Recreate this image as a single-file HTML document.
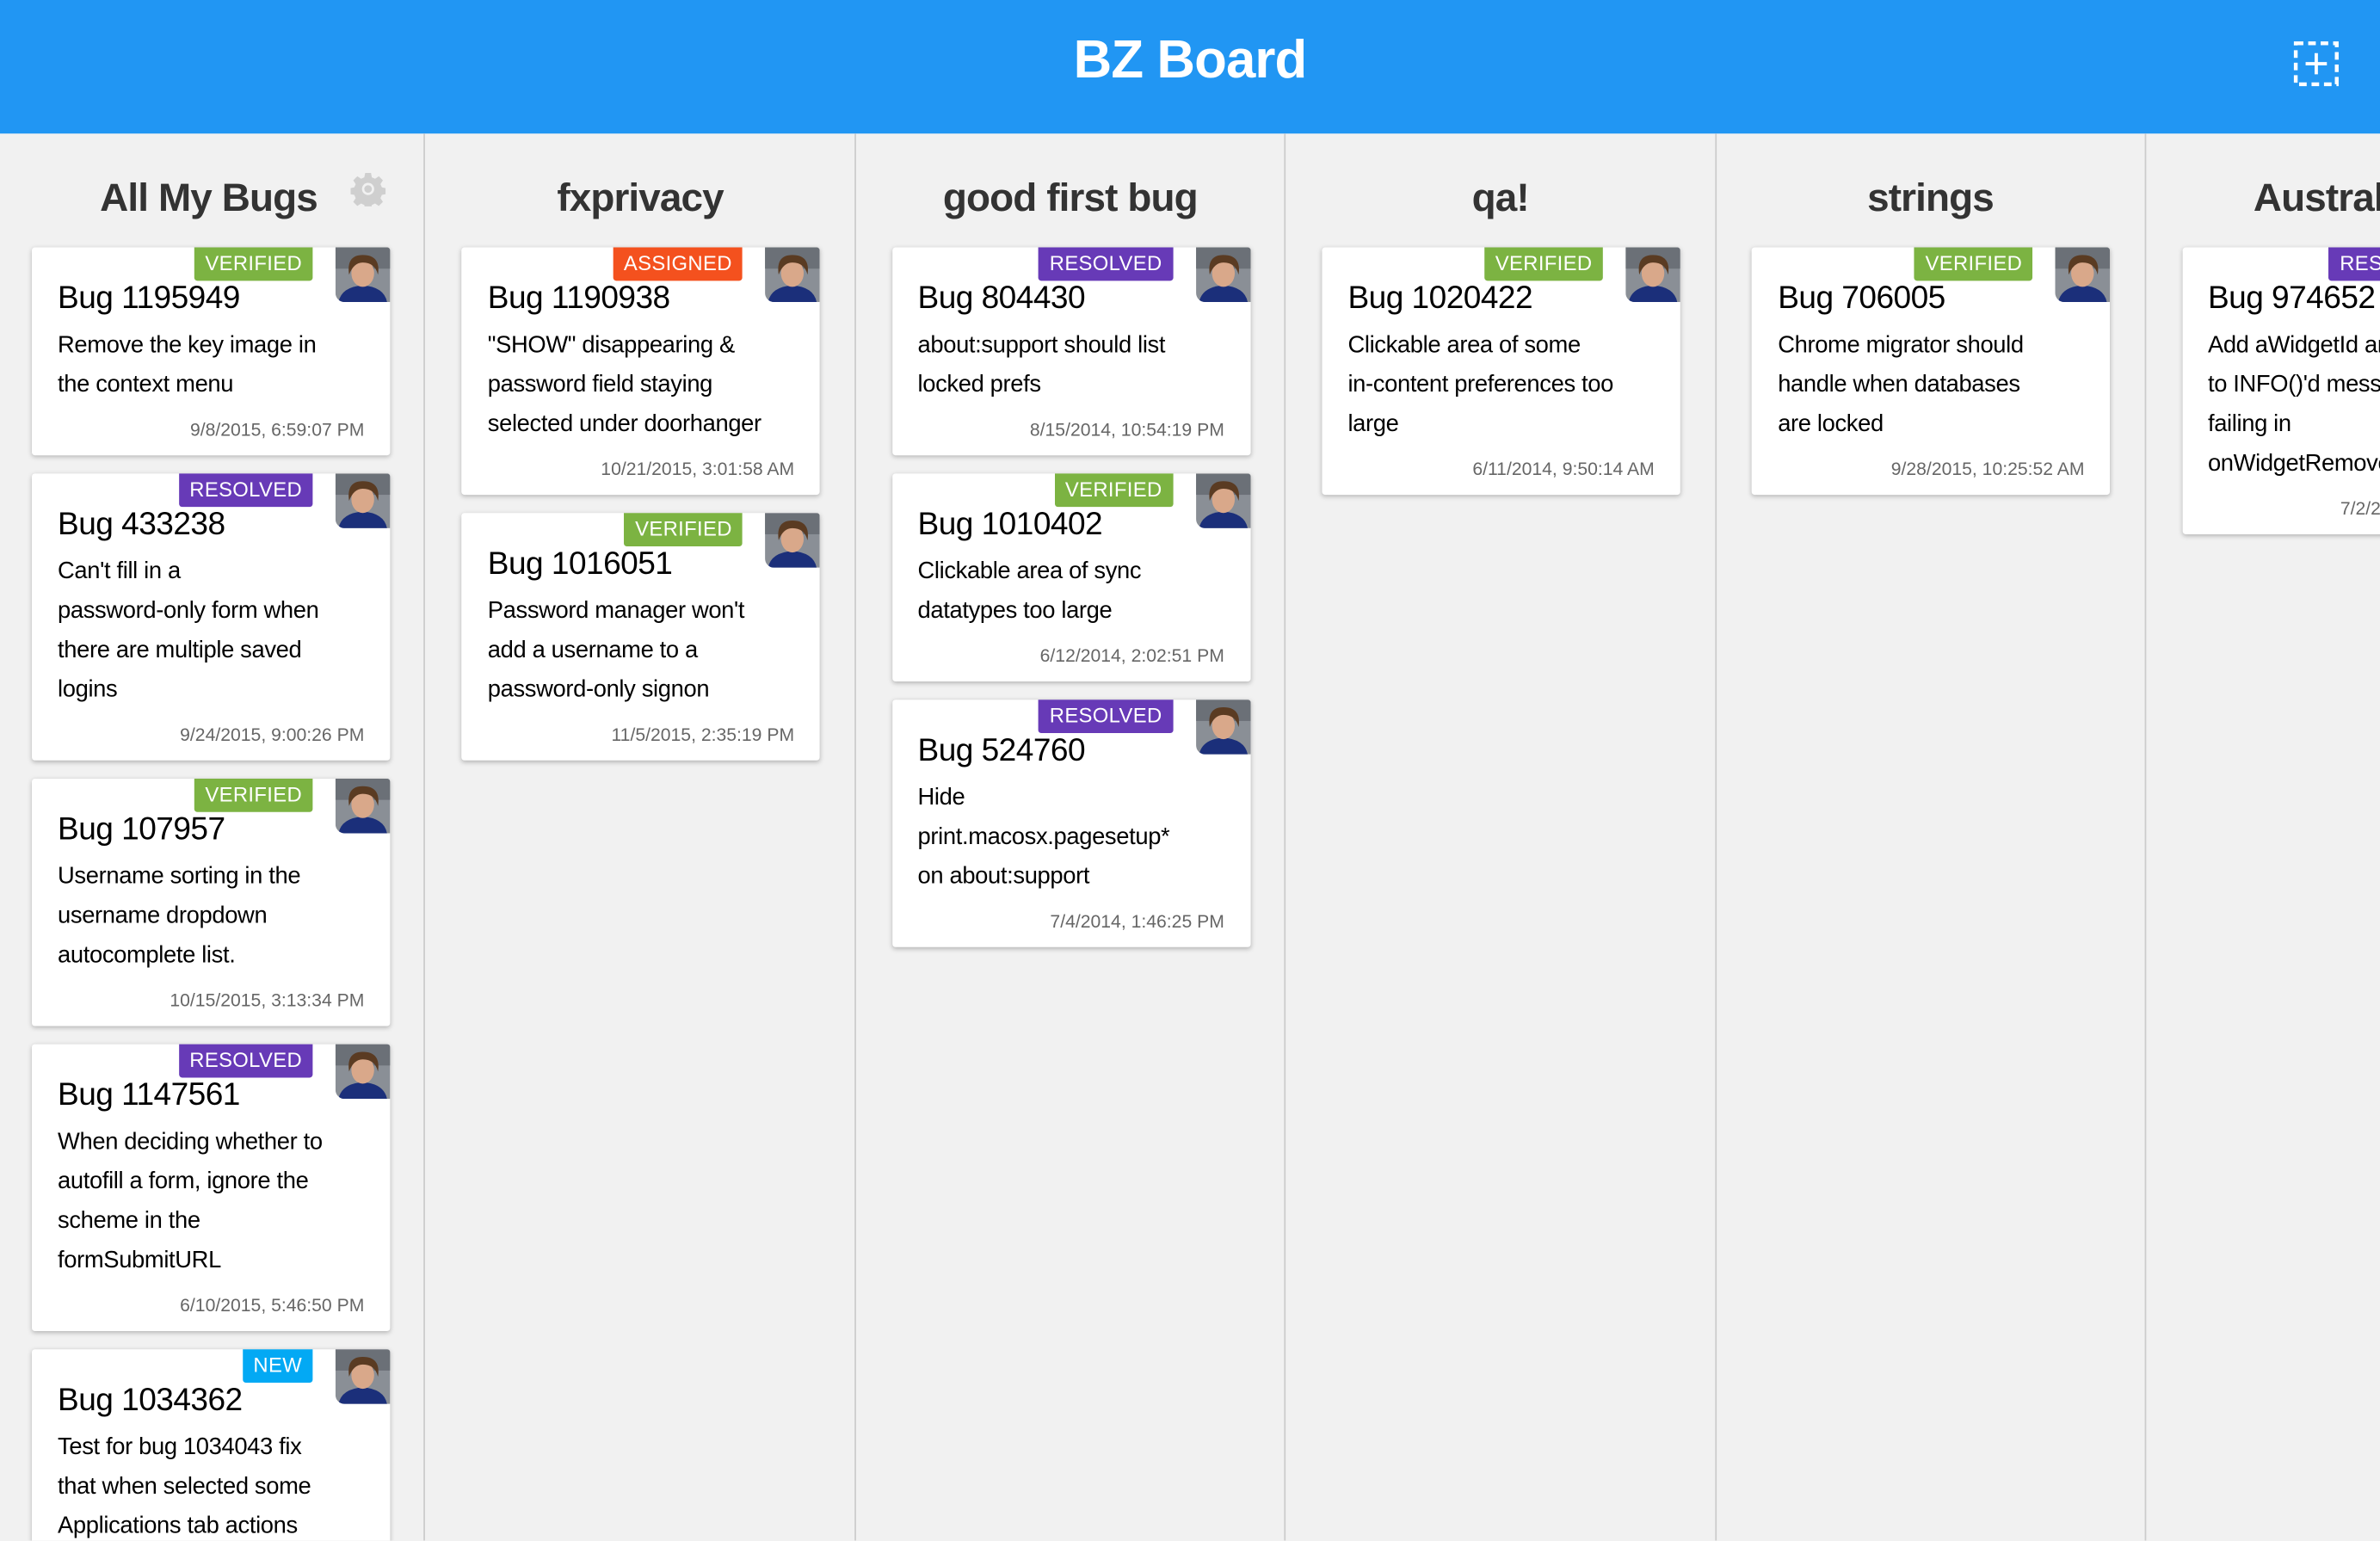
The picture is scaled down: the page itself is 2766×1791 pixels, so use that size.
<!DOCTYPE html>
<html><head><meta charset="utf-8">
<style>
html,body{margin:0;padding:0;width:2766px;height:1790px;overflow:hidden;background:#f1f1f1;}
#s{position:absolute;left:0;top:0;width:1568px;height:1015px;transform:scale(1.76403);transform-origin:0 0;font-family:"Liberation Sans",sans-serif;overflow:hidden;}
#hd{position:absolute;left:0;top:0;width:1568px;height:88px;background:#2196f3;}
#hd h1{margin:0;position:absolute;left:0;width:1568px;top:19px;text-align:center;color:#fff;font-size:35px;line-height:42px;font-weight:bold;letter-spacing:-0.5px;}
.col{position:absolute;top:88px;width:283px;height:927px;}
.ln{position:absolute;top:88px;width:1px;height:927px;background:#cccccc;}
.col h2{margin:0;position:absolute;top:24px;left:-3px;width:283px;text-align:center;font-size:26px;line-height:36px;color:#333;font-weight:bold;letter-spacing:-0.5px;}
.card{position:absolute;left:21px;width:236px;background:#fff;border-radius:2px;box-shadow:0 1px 3px rgba(0,0,0,.25);}
.in{padding:21px 17px 8px 17px;}
.t{font-size:21px;line-height:26px;color:#000;letter-spacing:-0.3px;}
.d{margin-top:5px;font-size:15.5px;line-height:26px;color:#000;white-space:nowrap;letter-spacing:-0.2px;}
.dt{margin-top:7px;font-size:12px;line-height:18px;color:#666;text-align:right;white-space:nowrap;}
.b{position:absolute;top:0;right:51px;height:22px;line-height:22px;padding:0 7px;color:#fff;font-size:13.5px;border-radius:0 0 2px 2px;letter-spacing:0.2px;}
.V{background:#7cb342}.R{background:#673ab7}.A{background:#f4511e}.N{background:#03a9f4}
.av{position:absolute;top:0;right:0;width:36px;height:36px;border-radius:0 2px 0 6px;overflow:hidden;}
</style></head><body><div id="s">
<svg width="0" height="0" style="position:absolute"><defs>
<symbol id="face" viewBox="0 0 36 36">
<rect width="36" height="36" fill="#8a8f96"/>
<rect width="36" height="14" fill="#6b7077"/>
<path d="M2 36 Q4 26 18 25 Q32 26 34 36Z" fill="#1b2f7a"/>
<ellipse cx="18" cy="17" rx="7.5" ry="9" fill="#d9a88a"/>
<path d="M9 18 Q7 5 18 5 Q30 5 28 18 Q26 10 18 10 Q12 10 9 18Z" fill="#5a3b22"/>
</symbol></defs></svg>
<div id="hd"><h1>BZ Board</h1>
<svg style="position:absolute;left:1511px;top:27px" width="30" height="30" viewBox="0 0 30 30"><rect x="1.5" y="1.5" width="27" height="27" fill="none" stroke="#fff" stroke-width="2.5" stroke-dasharray="5 3.2"/><path d="M15 8v14M8 15h14" stroke="#fff" stroke-width="2.2"/></svg>
</div>
<div class="ln" style="left:279px"></div><div class="ln" style="left:562.5px"></div><div class="ln" style="left:846px"></div><div class="ln" style="left:1129.5px"></div><div class="ln" style="left:1413px"></div>

<div class="col" style="left:0"><h2 style="left:-4px">All My Bugs</h2>
<svg style="position:absolute;left:231px;top:25px" width="23" height="23" viewBox="0 0 24 24"><path fill="#cfcfcf" d="M10 1h4l.6 3 2.2 1 2.6-1.7 2.8 2.8-1.7 2.6 1 2.2 3 .6v4l-3 .6-1 2.2 1.7 2.6-2.8 2.8-2.6-1.7-2.2 1-.6 3h-4l-.6-3-2.2-1-2.6 1.7-2.8-2.8 1.7-2.6-1-2.2-3-.6v-4l3-.6 1-2.2-1.7-2.6 2.8-2.8 2.6 1.7 2.2-1z"/><circle cx="12" cy="12" r="4.2" fill="#f1f1f1"/><circle cx="12" cy="12" r="2.6" fill="#cfcfcf"/></svg>
<div class="card" style="top:75px"><span class="b V">VERIFIED</span><svg class="av"><use href="#face"/></svg><div class="in"><div class="t">Bug 1195949</div><div class="d">Remove the key image in<br>the context menu</div><div class="dt">9/8/2015, 6:59:07 PM</div></div></div>
<div class="card" style="top:224px"><span class="b R">RESOLVED</span><svg class="av"><use href="#face"/></svg><div class="in"><div class="t">Bug 433238</div><div class="d">Can't fill in a<br>password-only form when<br>there are multiple saved<br>logins</div><div class="dt">9/24/2015, 9:00:26 PM</div></div></div>
<div class="card" style="top:425px"><span class="b V">VERIFIED</span><svg class="av"><use href="#face"/></svg><div class="in"><div class="t">Bug 107957</div><div class="d">Username sorting in the<br>username dropdown<br>autocomplete list.</div><div class="dt">10/15/2015, 3:13:34 PM</div></div></div>
<div class="card" style="top:600px"><span class="b R">RESOLVED</span><svg class="av"><use href="#face"/></svg><div class="in"><div class="t">Bug 1147561</div><div class="d">When deciding whether to<br>autofill a form, ignore the<br>scheme in the<br>formSubmitURL</div><div class="dt">6/10/2015, 5:46:50 PM</div></div></div>
<div class="card" style="top:801px"><span class="b N">NEW</span><svg class="av"><use href="#face"/></svg><div class="in"><div class="t">Bug 1034362</div><div class="d">Test for bug 1034043 fix<br>that when selected some<br>Applications tab actions</div></div></div>
</div>

<div class="col" style="left:283.3px"><h2>fxprivacy</h2>
<div class="card" style="top:75px"><span class="b A">ASSIGNED</span><svg class="av"><use href="#face"/></svg><div class="in"><div class="t">Bug 1190938</div><div class="d">"SHOW" disappearing &amp;<br>password field staying<br>selected under doorhanger</div><div class="dt">10/21/2015, 3:01:58 AM</div></div></div>
<div class="card" style="top:250px"><span class="b V">VERIFIED</span><svg class="av"><use href="#face"/></svg><div class="in"><div class="t">Bug 1016051</div><div class="d">Password manager won't<br>add a username to a<br>password-only signon</div><div class="dt">11/5/2015, 2:35:19 PM</div></div></div>
</div>

<div class="col" style="left:566.6px"><h2>good first bug</h2>
<div class="card" style="top:75px"><span class="b R">RESOLVED</span><svg class="av"><use href="#face"/></svg><div class="in"><div class="t">Bug 804430</div><div class="d">about:support should list<br>locked prefs</div><div class="dt">8/15/2014, 10:54:19 PM</div></div></div>
<div class="card" style="top:224px"><span class="b V">VERIFIED</span><svg class="av"><use href="#face"/></svg><div class="in"><div class="t">Bug 1010402</div><div class="d">Clickable area of sync<br>datatypes too large</div><div class="dt">6/12/2014, 2:02:51 PM</div></div></div>
<div class="card" style="top:373px"><span class="b R">RESOLVED</span><svg class="av"><use href="#face"/></svg><div class="in"><div class="t">Bug 524760</div><div class="d">Hide<br>print.macosx.pagesetup*<br>on about:support</div><div class="dt">7/4/2014, 1:46:25 PM</div></div></div>
</div>

<div class="col" style="left:850px"><h2>qa!</h2>
<div class="card" style="top:75px"><span class="b V">VERIFIED</span><svg class="av"><use href="#face"/></svg><div class="in"><div class="t">Bug 1020422</div><div class="d">Clickable area of some<br>in-content preferences too<br>large</div><div class="dt">6/11/2014, 9:50:14 AM</div></div></div>
</div>

<div class="col" style="left:1133.3px"><h2>strings</h2>
<div class="card" style="top:75px"><span class="b V">VERIFIED</span><svg class="av"><use href="#face"/></svg><div class="in"><div class="t">Bug 706005</div><div class="d">Chrome migrator should<br>handle when databases<br>are locked</div><div class="dt">9/28/2015, 10:25:52 AM</div></div></div>
</div>

<div class="col" style="left:1416.6px"><h2 style="left:0;text-align:left;padding-left:68px;width:auto;white-space:nowrap">Australis</h2>
<div class="card" style="top:75px"><span class="b R">RESOLVED</span><svg class="av"><use href="#face"/></svg><div class="in"><div class="t">Bug 974652</div><div class="d">Add aWidgetId and<br>to INFO()'d messages<br>failing in<br>onWidgetRemoved</div><div class="dt">7/2/2014, 1:00:00 PM</div></div></div>
</div>
</div></body></html>
